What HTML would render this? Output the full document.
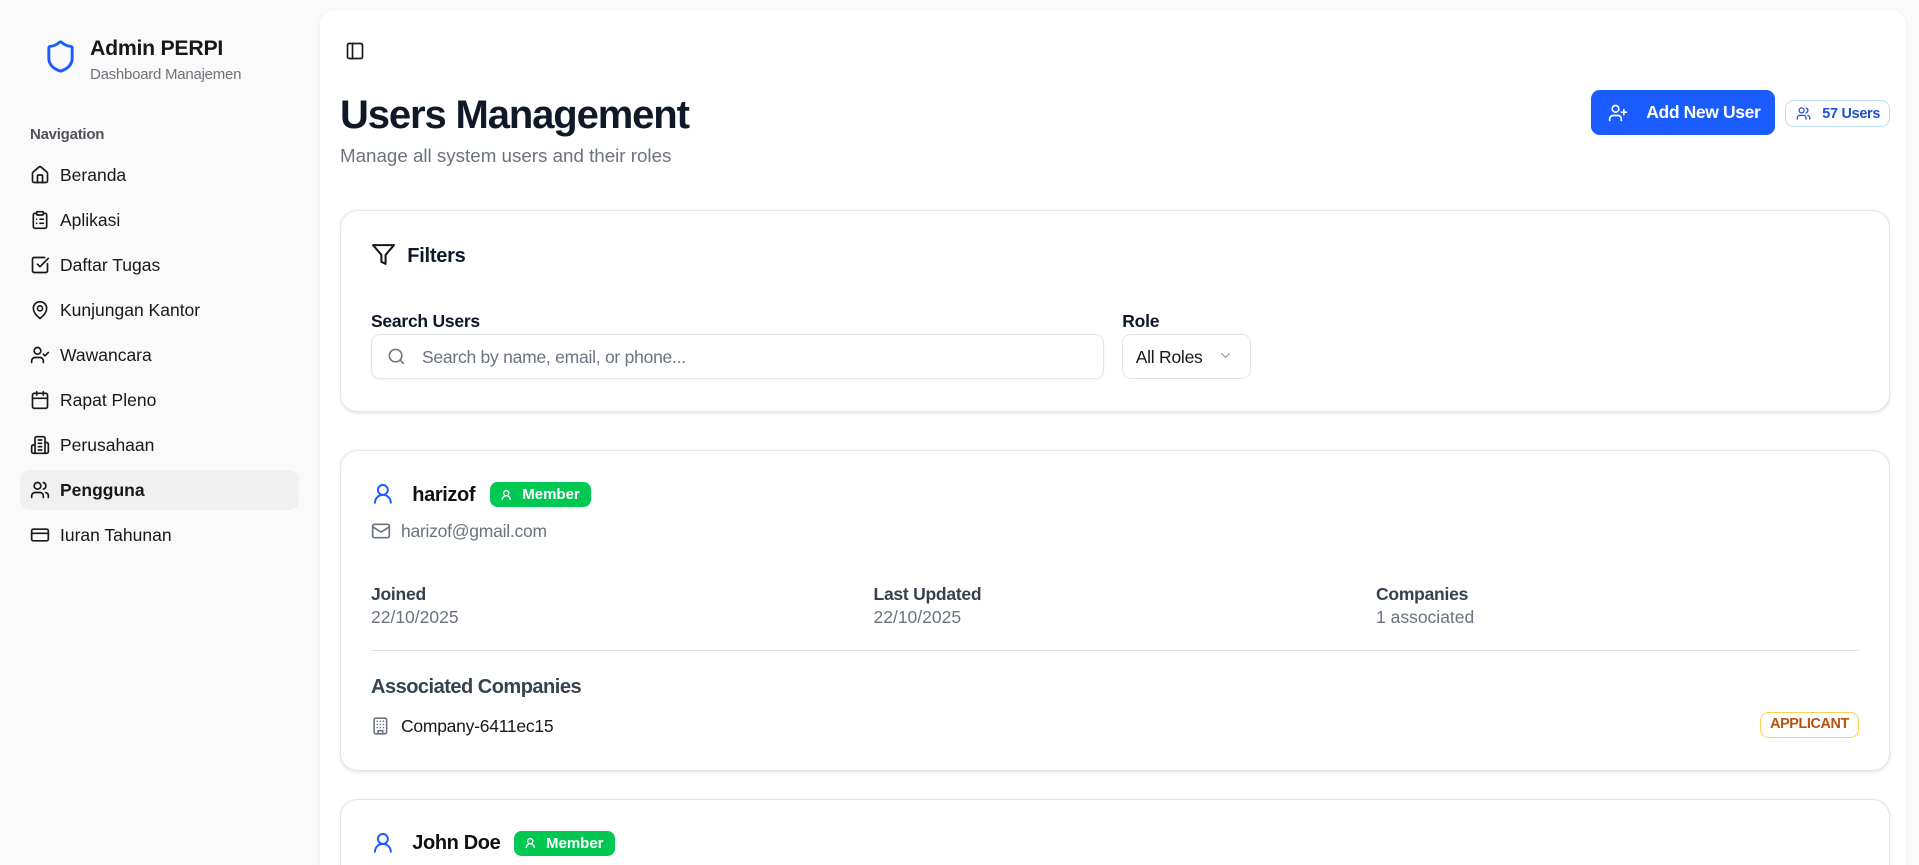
<!DOCTYPE html>
<html><head><meta charset="utf-8"><style>
html,body{margin:0;padding:0;overflow:hidden;width:1919px;height:865px;background:#fafafa}
#root{zoom:1.25;position:relative;width:1535px;height:692px;overflow:hidden;font-family:"Liberation Sans",sans-serif;color:#0f172a}
.side{position:absolute;left:0;top:0;width:256px;height:692px;background:#fafafa}
.abs{position:absolute}
svg{display:block}
.nav{position:absolute;left:16px;width:223px;height:32px;border-radius:8px;display:flex;align-items:center;font-size:14px;color:#18181b}
.nav svg{margin-left:8px;margin-right:8px}
.nav.act{background:#f0f0f1;font-weight:bold}
.main{position:absolute;left:256px;top:8px;width:1269px;height:684px;overflow:hidden;background:#fff;border-radius:12px 12px 0 0;box-shadow:0 1px 3px rgba(0,0,0,.08)}
.card{position:absolute;left:16px;width:1238px;background:#fff;border:1px solid #e4e4e7;border-radius:14px;box-shadow:0 1px 3px rgba(0,0,0,.1)}
.lbl{font-size:14px;font-weight:bold;color:#0f172a;letter-spacing:-0.2px}
.gl{font-size:14px;color:#374151;font-weight:bold;letter-spacing:-0.2px}
.gv{font-size:14px;color:#6b7280}
.badge{display:inline-flex;align-items:center;background:#00c853;color:#fff;font-size:12px;font-weight:bold;border-radius:6px;height:20px;padding:0 9px 0 8px}
</style></head><body><div id="root">
<div class="side">
  <svg class="abs" style="left:34px;top:31px" width="28" height="28" viewBox="0 0 24 24" fill="none" stroke="#1a5cff" stroke-width="2" stroke-linecap="round" stroke-linejoin="round"><path d="M20 13c0 5-3.5 7.5-7.66 8.95a1 1 0 0 1-.67-.01C7.5 20.5 4 18 4 13V6a1 1 0 0 1 1-1c2 0 4.5-1.2 6.24-2.72a1.17 1.17 0 0 1 1.52 0C14.51 3.81 17 5 19 5a1 1 0 0 1 1 1z"/></svg>
  <div class="abs" style="left:72px;top:29px;font-size:17px;font-weight:bold;color:#18181b;letter-spacing:-0.2px">Admin PERPI</div>
  <div class="abs" style="left:72px;top:53px;font-size:12px;color:#71717a;letter-spacing:-0.2px">Dashboard Manajemen</div>
  <div class="abs" style="left:24px;top:101px;font-size:12px;color:#52525b;font-weight:bold;letter-spacing:-0.2px">Navigation</div>
  <div class="nav" style="top:124px"><svg width="16" height="16" viewBox="0 0 24 24" fill="none" stroke="#18181b" stroke-width="2" stroke-linecap="round" stroke-linejoin="round"><path d="M15 21v-8a1 1 0 0 0-1-1h-4a1 1 0 0 0-1 1v8"/><path d="M3 10a2 2 0 0 1 .71-1.53l7-6a2 2 0 0 1 2.58 0l7 6A2 2 0 0 1 21 10v9a2 2 0 0 1-2 2H5a2 2 0 0 1-2-2z"/></svg>Beranda</div>
  <div class="nav" style="top:160px"><svg width="16" height="16" viewBox="0 0 24 24" fill="none" stroke="#18181b" stroke-width="2" stroke-linecap="round" stroke-linejoin="round"><rect x="8" y="2" width="8" height="4" rx="1"/><path d="M16 4h2a2 2 0 0 1 2 2v14a2 2 0 0 1-2 2H6a2 2 0 0 1-2-2V6a2 2 0 0 1 2-2h2"/><path d="M12 11h4M12 16h4M8 11h.01M8 16h.01"/></svg>Aplikasi</div>
  <div class="nav" style="top:196px"><svg width="16" height="16" viewBox="0 0 24 24" fill="none" stroke="#18181b" stroke-width="2" stroke-linecap="round" stroke-linejoin="round"><path d="M21 10.5V19a2 2 0 0 1-2 2H5a2 2 0 0 1-2-2V5a2 2 0 0 1 2-2h12.5"/><path d="m9 11 3 3L22 4"/></svg>Daftar Tugas</div>
  <div class="nav" style="top:232px"><svg width="16" height="16" viewBox="0 0 24 24" fill="none" stroke="#18181b" stroke-width="2" stroke-linecap="round" stroke-linejoin="round"><path d="M20 10c0 5-5.5 10.2-7.4 11.8a1 1 0 0 1-1.2 0C9.5 20.2 4 15 4 10a8 8 0 0 1 16 0"/><circle cx="12" cy="10" r="3"/></svg>Kunjungan Kantor</div>
  <div class="nav" style="top:268px"><svg width="16" height="16" viewBox="0 0 24 24" fill="none" stroke="#18181b" stroke-width="2" stroke-linecap="round" stroke-linejoin="round"><path d="m16 11 2 2 4-4"/><path d="M16 21v-2a4 4 0 0 0-4-4H6a4 4 0 0 0-4 4v2"/><circle cx="9" cy="7" r="4"/></svg>Wawancara</div>
  <div class="nav" style="top:304px"><svg width="16" height="16" viewBox="0 0 24 24" fill="none" stroke="#18181b" stroke-width="2" stroke-linecap="round" stroke-linejoin="round"><path d="M8 2v4M16 2v4"/><rect x="3" y="4" width="18" height="18" rx="2"/><path d="M3 10h18"/></svg>Rapat Pleno</div>
  <div class="nav" style="top:340px"><svg width="16" height="16" viewBox="0 0 24 24" fill="none" stroke="#18181b" stroke-width="2" stroke-linecap="round" stroke-linejoin="round"><path d="M6 22V4a2 2 0 0 1 2-2h8a2 2 0 0 1 2 2v18Z"/><path d="M6 12H4a2 2 0 0 0-2 2v6a2 2 0 0 0 2 2h2M18 9h2a2 2 0 0 1 2 2v9a2 2 0 0 1-2 2h-2M10 6h4M10 10h4M10 14h4M10 18h4"/></svg>Perusahaan</div>
  <div class="nav act" style="top:376px"><svg width="16" height="16" viewBox="0 0 24 24" fill="none" stroke="#18181b" stroke-width="2" stroke-linecap="round" stroke-linejoin="round"><path d="M16 21v-2a4 4 0 0 0-4-4H6a4 4 0 0 0-4 4v2"/><circle cx="9" cy="7" r="4"/><path d="M22 21v-2a4 4 0 0 0-3-3.87M16 3.13a4 4 0 0 1 0 7.75"/></svg>Pengguna</div>
  <div class="nav" style="top:412px"><svg width="16" height="16" viewBox="0 0 24 24" fill="none" stroke="#18181b" stroke-width="2" stroke-linecap="round" stroke-linejoin="round"><rect x="2" y="5" width="20" height="14" rx="2"/><path d="M2 10h20"/></svg>Iuran Tahunan</div>
</div>
<div class="main">
  <svg class="abs" style="left:20px;top:25px" width="16" height="16" viewBox="0 0 24 24" fill="none" stroke="#18181b" stroke-width="2" stroke-linecap="round" stroke-linejoin="round"><rect x="3" y="3" width="18" height="18" rx="2"/><path d="M9 3v18"/></svg>
  <div class="abs" style="left:16px;top:66px;font-size:32px;font-weight:bold;color:#111827;letter-spacing:-0.9px">Users Management</div>
  <div class="abs" style="left:16px;top:108px;font-size:15px;color:#6b7280">Manage all system users and their roles</div>
  <div class="abs" style="left:1017px;top:64px;width:147px;height:36px;background:#1a5cff;border-radius:7px;color:#fff;font-size:14px;font-weight:bold;display:flex;align-items:center;letter-spacing:-0.3px">
    <svg style="margin-left:13px;margin-right:15px" width="16" height="16" viewBox="0 0 24 24" fill="none" stroke="#fff" stroke-width="2" stroke-linecap="round" stroke-linejoin="round"><path d="M16 21v-2a4 4 0 0 0-4-4H6a4 4 0 0 0-4 4v2"/><circle cx="9" cy="7" r="4"/><path d="M19 8v6M22 11h-6"/></svg>Add New User</div>
  <div class="abs" style="left:1172px;top:72px;width:82px;height:20px;border:1px solid #bfdbfe;border-radius:7px;color:#1d4ed8;font-size:11.5px;font-weight:bold;display:flex;align-items:center;letter-spacing:-0.2px">
    <svg style="margin-left:8px;margin-right:9px" width="12" height="12" viewBox="0 0 24 24" fill="none" stroke="#1d4ed8" stroke-width="2" stroke-linecap="round" stroke-linejoin="round"><path d="M16 21v-2a4 4 0 0 0-4-4H6a4 4 0 0 0-4 4v2"/><circle cx="9" cy="7" r="4"/><path d="M22 21v-2a4 4 0 0 0-3-3.87M16 3.13a4 4 0 0 1 0 7.75"/></svg>57 Users</div>

  <div class="card" style="top:160px;height:160px">
    <svg class="abs" style="left:24px;top:25px" width="20" height="20" viewBox="0 0 24 24" fill="none" stroke="#18181b" stroke-width="2" stroke-linecap="round" stroke-linejoin="round"><path d="M22 3H2l8 9.46V19l4 2v-8.54L22 3z"/></svg>
    <div class="abs lbl" style="left:53px;top:27px;font-size:16px">Filters</div>
    <div class="abs lbl" style="left:24px;top:80px">Search Users</div>
    <div class="abs" style="left:24px;top:98px;width:585px;height:35px;border:1px solid #e4e4e7;border-radius:7px;box-shadow:0 1px 2px rgba(0,0,0,.04)">
      <svg class="abs" style="left:12px;top:10px" width="15" height="15" viewBox="0 0 24 24" fill="none" stroke="#6b7280" stroke-width="2" stroke-linecap="round"><circle cx="11" cy="11" r="8"/><path d="m21 21-4.3-4.3"/></svg>
      <div class="abs" style="left:40px;top:10px;font-size:14px;color:#6b7280;letter-spacing:-0.2px">Search by name, email, or phone...</div>
    </div>
    <div class="abs lbl" style="left:625px;top:80px">Role</div>
    <div class="abs" style="left:625px;top:98px;width:101px;height:35px;border:1px solid #e4e4e7;border-radius:7px">
      <div class="abs" style="left:10px;top:10px;font-size:14px;color:#18181b;letter-spacing:-0.2px">All Roles</div>
      <svg class="abs" style="left:76px;top:11px" width="12" height="12" viewBox="0 0 24 24" fill="none" stroke="#a1a1aa" stroke-width="2" stroke-linecap="round"><path d="m6 9 6 6 6-6"/></svg>
    </div>
  </div>

  <div class="card" style="top:352px;height:255px">
    <svg class="abs" style="left:24px;top:25px" width="19" height="19" viewBox="0 0 24 24" fill="none" stroke="#1a5cff" stroke-width="2" stroke-linecap="round"><circle cx="12" cy="8" r="5"/><path d="M20 21a8 8 0 0 0-16 0"/></svg>
    <div class="abs" style="left:57px;top:26px;font-size:16px;font-weight:bold;color:#111;letter-spacing:-0.3px">harizof</div>
    <div class="abs" style="left:119px;top:25px"><span class="badge"><svg style="margin-right:8px" width="10" height="10" viewBox="0 0 24 24" fill="none" stroke="#fff" stroke-width="2.5"><circle cx="12" cy="8" r="5"/><path d="M20 21a8 8 0 0 0-16 0"/></svg>Member</span></div>
    <svg class="abs" style="left:24px;top:56px" width="16" height="16" viewBox="0 0 24 24" fill="none" stroke="#6b7280" stroke-width="2" stroke-linecap="round" stroke-linejoin="round"><rect x="2" y="4" width="20" height="16" rx="2"/><path d="m22 7-8.97 5.7a1.94 1.94 0 0 1-2.06 0L2 7"/></svg>
    <div class="abs gv" style="left:48px;top:56px;letter-spacing:-0.2px">harizof@gmail.com</div>
    <div class="abs gl" style="left:24px;top:106px">Joined</div>
    <div class="abs gv" style="left:24px;top:125px">22/10/2025</div>
    <div class="abs gl" style="left:426px;top:106px">Last Updated</div>
    <div class="abs gv" style="left:426px;top:125px">22/10/2025</div>
    <div class="abs gl" style="left:828px;top:106px">Companies</div>
    <div class="abs gv" style="left:828px;top:125px">1 associated</div>
    <div class="abs" style="left:24px;top:159px;width:1190px;height:1px;background:#e4e4e7"></div>
    <div class="abs" style="left:24px;top:180px;font-size:16px;font-weight:bold;color:#374151;letter-spacing:-0.4px">Associated Companies</div>
    <svg class="abs" style="left:24px;top:212px" width="15" height="16" viewBox="0 0 24 24" fill="none" stroke="#6b7280" stroke-width="2" stroke-linecap="round"><rect x="4" y="2" width="16" height="20" rx="2"/><path d="M9 22v-4h6v4M8 6h.01M12 6h.01M16 6h.01M8 10h.01M12 10h.01M16 10h.01M8 14h.01M12 14h.01M16 14h.01"/></svg>
    <div class="abs" style="left:48px;top:212px;font-size:14px;color:#18181b;letter-spacing:-0.2px">Company-6411ec15</div>
    <div class="abs" style="left:1135px;top:209px;width:78px;height:19px;border:1px solid #fcd34d;border-radius:7px;color:#b45309;font-size:11.5px;font-weight:bold;text-align:center;line-height:19px;letter-spacing:-0.3px">APPLICANT</div>
  </div>

  <div class="card" style="top:631px;height:100px">
    <svg class="abs" style="left:24px;top:25px" width="19" height="19" viewBox="0 0 24 24" fill="none" stroke="#1a5cff" stroke-width="2" stroke-linecap="round"><circle cx="12" cy="8" r="5"/><path d="M20 21a8 8 0 0 0-16 0"/></svg>
    <div class="abs" style="left:57px;top:26px;font-size:16px;font-weight:bold;color:#111;letter-spacing:-0.3px">John Doe</div>
    <div class="abs" style="left:138px;top:25px"><span class="badge"><svg style="margin-right:8px" width="10" height="10" viewBox="0 0 24 24" fill="none" stroke="#fff" stroke-width="2.5"><circle cx="12" cy="8" r="5"/><path d="M20 21a8 8 0 0 0-16 0"/></svg>Member</span></div>
  </div>
</div>
</div></body></html>
